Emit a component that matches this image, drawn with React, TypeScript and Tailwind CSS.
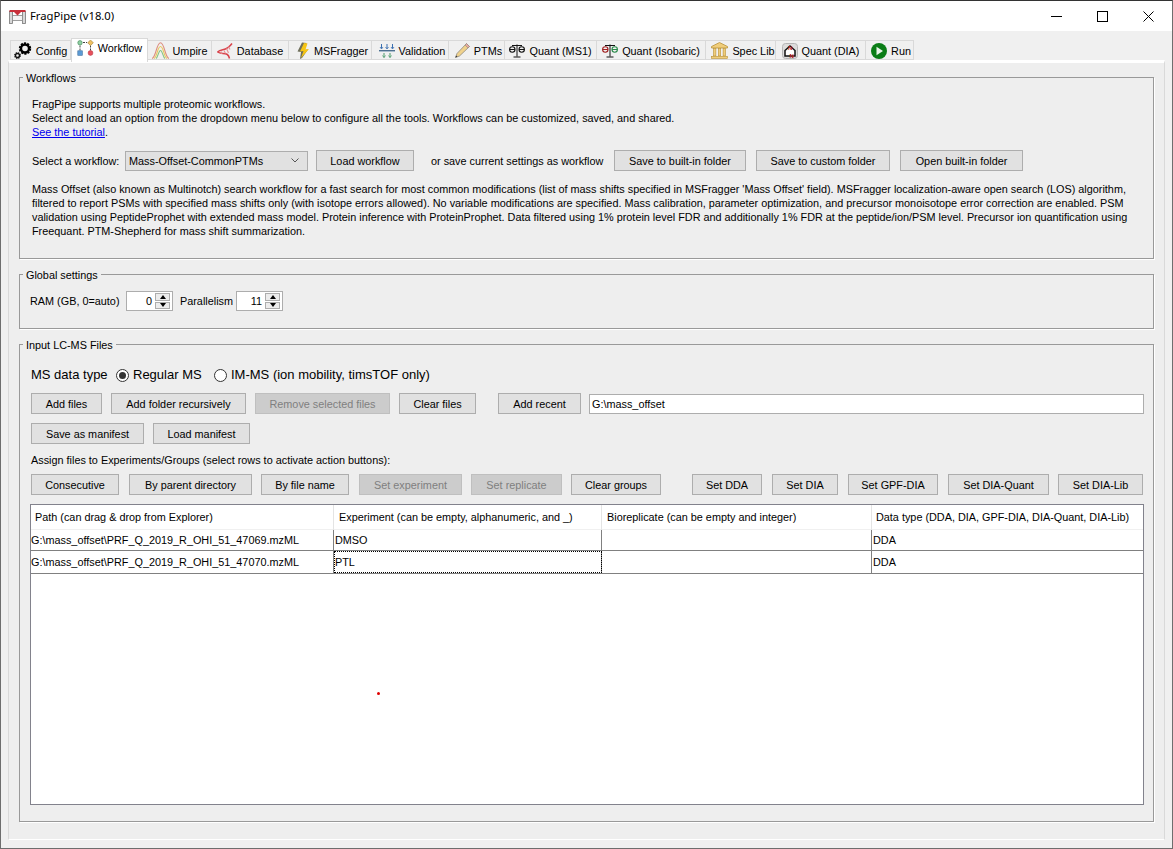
import type { ReactNode } from "react";

const fontStack = "font-['Liberation_Sans',sans-serif]";

function ConfigIcon() {
  return (
    <svg width="18" height="17" viewBox="0 0 18 17">
      <circle cx="11" cy="6.5" r="5" fill="none" stroke="#000" strokeWidth="2.4" strokeDasharray="2 1.14" />
      <circle cx="11" cy="6.5" r="4" fill="none" stroke="#000" strokeWidth="2.4" />
      <circle cx="3.5" cy="13.5" r="2.6" fill="none" stroke="#000" strokeWidth="1.5" strokeDasharray="1.2 .85" />
      <circle cx="3.5" cy="13.5" r="2" fill="none" stroke="#111" strokeWidth="1.4" />
    </svg>
  );
}

function WorkflowIcon() {
  return (
    <svg width="17" height="16" viewBox="0 0 17 16">
      <path d="M6 2.5h4M3 5.5v5M13.5 5.5v5" stroke="#444" strokeWidth="1" strokeDasharray="2 1" fill="none" />
      <circle cx="3" cy="2.8" r="2.2" fill="#8fd0a4" stroke="#4b8f5f" strokeWidth="0.7" />
      <path d="M13.5 0l2.8 2.8-2.8 2.8-2.8-2.8z" fill="#efc063" stroke="#a8863a" strokeWidth="0.7" />
      <rect x="0.8" y="10.8" width="4.5" height="4.5" fill="#5b9bd5" stroke="#3c6e9e" strokeWidth="0.6" />
      <circle cx="13.5" cy="13" r="2.4" fill="#e8505c" stroke="#b83a44" strokeWidth="0.6" />
    </svg>
  );
}

function UmpireIcon() {
  return (
    <svg width="17" height="17" viewBox="0 0 17 17" fill="none">
      <path d="M0 16.5C4 15.5 4.500 .8 8.500 .8S13 15.500 17 16.500" stroke="#dd8f80" strokeWidth="1.1" />
      <path d="M2 16.5C5 15.5 5.500 4.500 8.500 4.500S12 15.500 15 16.500" stroke="#e9c95a" strokeWidth="1.1" />
      <path d="M4 16.5C6 15.5 6.500 8.500 8.500 8.500S11 15.500 13 16.500" stroke="#84c484" strokeWidth="1.1" />
    </svg>
  );
}

function DatabaseIcon() {
  return (
    <svg width="16" height="16" viewBox="0 0 16 16" fill="none">
      <path d="M.5 9C5 5 9 9 15 .5" stroke="#d8434b" strokeWidth="1.5" />
      <path d="M.5 9C5 12 11 8 12.5 15.5" stroke="#d8434b" strokeWidth="1.5" />
      <path d="M4 8.5l1 2.5M7 7.5l1.500 3M9.500 5.500l2 4.500M11.500 3.500l1.500 3" stroke="#ea8f93" strokeWidth="1.1" />
    </svg>
  );
}

function BoltIcon() {
  return (
    <svg width="13" height="17" viewBox="0 0 13 17">
      <path d="M5 .5L.5 9.5l3.500.5-1 7 2-1 6-8.500-3.500.5L9.500 1z" fill="#6f6f5a" />
      <path d="M7 1L3 9.500l3.500-.5L4 16l8-9-3.500.5L10.500 1.500z" fill="#f6c514" />
    </svg>
  );
}

function ValidationIcon() {
  return (
    <svg width="16" height="14" viewBox="0 0 16 14" fill="none">
      <path d="M0 6.5h16" stroke="#4e6f8f" strokeWidth="1" />
      <path d="M0 7.5h16" stroke="#a8bccc" strokeWidth="1" />
      <path d="M2.5 0v4.500M8 0v4.500M13.500 0v4.500" stroke="#3a6fb0" strokeWidth="1" />
      <path d="M1 3l1.500 2L4 3M6.500 3L8 5l1.500-2M12 3l1.500 2L15 3" stroke="#3a6fb0" strokeWidth="0.8" />
      <path d="M5 9v4.500M11 9v4.500" stroke="#4a9a6a" strokeWidth="1" />
      <path d="M3.5 11.5l1.500 2 1.500-2M9.500 11.500l1.500 2 1.500-2" stroke="#4a9a6a" strokeWidth="0.8" />
    </svg>
  );
}

function PencilIcon() {
  return (
    <svg width="15" height="15" viewBox="0 0 15 15">
      <path d="M11.5 .5l3 3L4.500 13 .5 14.500 2 10.500z" fill="#f0d28c" stroke="#8f8a80" strokeWidth="0.8" />
      <path d="M11.5 .5l3 3-1.500 1.500-3-3z" fill="#e8a8a0" stroke="#8f8a80" strokeWidth="0.6" />
      <path d="M.5 14.500l.6-2 1.400 1.300z" fill="#333" />
    </svg>
  );
}

function ScaleIcon({ left = "#111", right = "#111" }: { left?: string; right?: string }) {
  return (
    <svg width="16" height="14" viewBox="0 0 16 14" fill="none">
      <path d="M8 .5v12M4.500 13h7M3 1.500h10" stroke="#111" strokeWidth="1" />
      <circle cx="3.3" cy="5.5" r="2.7" stroke={left} strokeWidth="1.1" />
      <circle cx="12.7" cy="5.5" r="2.7" stroke={right} strokeWidth="1.1" />
      <path d="M.6 5.5h5.400" stroke={left} strokeWidth="1" />
      <path d="M10 5.5h5.400" stroke={right} strokeWidth="1" />
    </svg>
  );
}

function LibraryIcon() {
  return (
    <svg width="17" height="17" viewBox="0 0 17 17">
      <path d="M8.5 .5L16.500 4.500V6H.5V4.500z" fill="#f0cd7a" stroke="#b8923a" strokeWidth="0.8" />
      <rect x="2.5" y="6.5" width="2.4" height="7.5" fill="#f0cd7a" stroke="#b8923a" strokeWidth="0.6" />
      <rect x="7.3" y="6.5" width="2.4" height="7.5" fill="#f0cd7a" stroke="#b8923a" strokeWidth="0.6" />
      <rect x="12.1" y="6.5" width="2.4" height="7.5" fill="#f0cd7a" stroke="#b8923a" strokeWidth="0.6" />
      <rect x="0.5" y="14.3" width="16" height="2.2" fill="#f0cd7a" stroke="#b8923a" strokeWidth="0.6" />
    </svg>
  );
}

function DiaIcon() {
  return (
    <svg width="16" height="16" viewBox="0 0 16 16" fill="none">
      <rect x="0.5" y="0.5" width="15" height="15" rx="3" fill="#dcdcdc" stroke="#b4b4b4" />
      <path d="M8 3l5 4.500V13H3V7.500z" stroke="#111" strokeWidth="1.5" fill="#fff" />
      <text x="6" y="6.5" fontSize="6" fontWeight="700" fill="#b82020" fontFamily="Liberation Sans, sans-serif">N</text>
      <text x="7.5" y="14.5" fontSize="6" fontWeight="700" fill="#b82020" fontFamily="Liberation Sans, sans-serif">N</text>
    </svg>
  );
}

function RunIcon() {
  return (
    <svg width="16" height="16" viewBox="0 0 16 16">
      <circle cx="8" cy="8" r="8" fill="#0a7d16" />
      <path d="M5.5 3.8L12 8l-6.500 4.200z" fill="#e8f4e8" />
    </svg>
  );
}

function AppIcon() {
  return (
    <svg width="17" height="15" viewBox="0 0 17 15" fill="none">
      <rect x="0.5" y="2.5" width="3" height="12" fill="#d8d8d8" stroke="#777" strokeWidth="0.8" />
      <rect x="13.5" y="2.5" width="3" height="12" fill="#d8d8d8" stroke="#777" strokeWidth="0.8" />
      <rect x="3.5" y="6.5" width="10" height="5" fill="#f4f4f4" stroke="#888" strokeWidth="0.8" />
      <path d="M.5 1h16v2H.5z" fill="#c8303a" />
      <path d="M5 3h7L8.500 6.500z" fill="#c8303a" />
    </svg>
  );
}

function Tab({ w, icon, label, active }: { w: string; icon: ReactNode; label: string; active?: boolean }) {
  return (
    <div
      className={`${w} flex items-center justify-center gap-[4px] border border-[#d9d9d9] whitespace-nowrap ${
        active ? "h-[24px] -mb-[2px] border-b-0 bg-white pb-[5px]" : "h-[20px] -ml-px bg-[#f0f0f0] pt-px"
      }`}
    >
      {icon}
      <span>{label}</span>
    </div>
  );
}

function Btn({ w, children, disabled }: { w: string; children: ReactNode; disabled?: boolean }) {
  return (
    <div
      className={`${w} h-[21px] flex shrink-0 items-center justify-center border whitespace-nowrap ${
        disabled ? "bg-[#cccccc] border-[#bfbfbf] text-[#7f7f7f]" : "bg-[#e1e1e1] border-[#adadad]"
      }`}
    >
      {children}
    </div>
  );
}

function Spinner({ w, value }: { w: string; value: string }) {
  return (
    <div className={`${w} h-[20px] flex bg-white border border-[#adadad] p-px`}>
      <div className="flex-1 text-right pr-[3px] leading-[16px]">{value}</div>
      <div className="w-[15px] flex flex-col gap-px mr-px">
        <div className="flex-1 flex items-center justify-center border border-[#adadad] bg-[#ececec]">
          <div className="w-0 h-0 border-x-[3px] border-x-transparent border-b-[4px] border-b-black" />
        </div>
        <div className="flex-1 flex items-center justify-center border border-[#adadad] bg-[#ececec]">
          <div className="w-0 h-0 border-x-[3px] border-x-transparent border-t-[4px] border-t-black" />
        </div>
      </div>
    </div>
  );
}

function Group({ title, className, children }: { title: string; className: string; children: ReactNode }) {
  return (
    <div className={`relative border border-[#999999] shadow-[1px_1px_0_#ffffff] ${className}`}>
      <div className="absolute -top-[7px] left-[3px] bg-[#eeeeee] px-[3px] leading-[14px]">{title}</div>
      {children}
    </div>
  );
}

function Radio({ checked }: { checked?: boolean }) {
  return (
    <div className="w-[13px] h-[13px] rounded-full border border-[#333] bg-white flex items-center justify-center">
      {checked && <div className="w-[7px] h-[7px] rounded-full bg-[#333]" />}
    </div>
  );
}

const rows = [
  { path: "G:\\mass_offset\\PRF_Q_2019_R_OHI_51_47069.mzML", exp: "DMSO" },
  { path: "G:\\mass_offset\\PRF_Q_2019_R_OHI_51_47070.mzML", exp: "PTL" },
];

export default function App() {
  return (
    <div className={`w-[1173px] h-[849px] flex flex-col overflow-hidden bg-[#f0f0f0] border border-[#6e6e6e] border-t-[#333] relative text-[10.85px] leading-[14px] text-black ${fontStack}`}>
      {/* Title bar */}
      <div className="h-[30px] shrink-0 bg-white flex items-center pl-[8px]">
        <AppIcon />
        <span className="ml-[4px] text-[11.25px] font-['Noto_Sans',sans-serif]">FragPipe (v18.0)</span>
        <div className="ml-auto flex items-center">
          <div className="w-[46px] flex justify-center"><div className="w-[11px] h-px bg-black" /></div>
          <div className="w-[46px] flex justify-center"><div className="w-[11px] h-[11px] border border-black" /></div>
          <svg className="mx-[18px]" width="11" height="11" viewBox="0 0 11 11"><path d="M.5.5l10 10M10.5.5l-10 10" stroke="#000" fill="none" /></svg>
        </div>
      </div>

      {/* Tabs */}
      <div className="flex items-end pl-[10px] pt-[7px] shrink-0 relative z-10">
        <Tab w="w-[61px]" icon={<ConfigIcon />} label="Config" />
        <Tab w="w-[77px]" active icon={<WorkflowIcon />} label="Workflow" />
        <Tab w="w-[65px]" icon={<UmpireIcon />} label="Umpire" />
        <Tab w="w-[78px]" icon={<DatabaseIcon />} label="Database" />
        <Tab w="w-[84px] pl-[5px]" icon={<BoltIcon />} label="MSFragger" />
        <Tab w="w-[78px] pl-[4px]" icon={<ValidationIcon />} label="Validation" />
        <Tab w="w-[57px] pl-[4px]" icon={<PencilIcon />} label="PTMs" />
        <Tab w="w-[93px]" icon={<ScaleIcon />} label="Quant (MS1)" />
        <Tab w="w-[110px]" icon={<ScaleIcon left="#a02020" right="#2a8a4a" />} label="Quant (Isobaric)" />
        <Tab w="w-[71px] pl-[5px]" icon={<LibraryIcon />} label="Spec Lib" />
        <Tab w="w-[91px]" icon={<DiaIcon />} label="Quant (DIA)" />
        <Tab w="w-[49px] pl-[3px]" icon={<RunIcon />} label="Run" />
      </div>

      {/* Tab panel */}
      <div className="ml-[7px] mr-[7px] mb-[8px] flex-1 min-h-0 border border-[#d9d9d9] border-b-white bg-[#eeeeee] pt-[14px] px-[10px] flex flex-col border-t-[3px] border-t-white">
        <Group title="Workflows" className="h-[182px] pt-[19px] pl-[12px] shrink-0">
          <p>FragPipe supports multiple proteomic workflows.</p>
          <p>Select and load an option from the dropdown menu below to configure all the tools. Workflows can be customized, saved, and shared.</p>
          <p><span className="text-[#0000ee] underline">See the tutorial</span>.</p>
          <div className="flex items-center mt-[11px] h-[21px]">
            <span className="w-[93px] shrink-0">Select a workflow:</span>
            <div className="w-[183px] h-[20px] shrink-0 flex items-center justify-between border border-[#adadad] bg-[#e1e1e1] pl-[3px] pr-[8px]">
              <span>Mass-Offset-CommonPTMs</span>
              <svg width="8" height="5" viewBox="0 0 8 5"><path d="M.5.5L4 4l3.500-3.500" fill="none" stroke="#555" /></svg>
            </div>
            <Btn w="w-[98px] ml-[8px]">Load workflow</Btn>
            <span className="ml-[17px] w-[183px] shrink-0 whitespace-nowrap">or save current settings as workflow</span>
            <Btn w="w-[132px]">Save to built-in folder</Btn>
            <Btn w="w-[134px] ml-[10px]">Save to custom folder</Btn>
            <Btn w="w-[123px] ml-[10px]">Open built-in folder</Btn>
          </div>
          <div className="mt-[11px] whitespace-nowrap">
            <p>Mass Offset (also known as Multinotch) search workflow for a fast search for most common modifications (list of mass shifts specified in MSFragger 'Mass Offset' field). MSFragger localization-aware open search (LOS) algorithm,</p>
            <p>filtered to report PSMs with specified mass shifts only (with isotope errors allowed). No variable modifications are specified. Mass calibration, parameter optimization, and precursor monoisotope error correction are enabled. PSM</p>
            <p>validation using PeptideProphet with extended mass model. Protein inference with ProteinProphet. Data filtered using 1% protein level FDR and additionally 1% FDR at the peptide/ion/PSM level. Precursor ion quantification using</p>
            <p>Freequant. PTM-Shepherd for mass shift summarization.</p>
          </div>
        </Group>

        <Group title="Global settings" className="h-[55px] mt-[15px] pt-[16px] pl-[10px] shrink-0">
          <div className="flex items-center">
            <span className="w-[96px] shrink-0 whitespace-nowrap">RAM (GB, 0=auto)</span>
            <Spinner w="w-[47px]" value="0" />
            <span className="ml-[7px] w-[56px] shrink-0">Parallelism</span>
            <Spinner w="w-[47px]" value="11" />
          </div>
        </Group>

        <Group title="Input LC-MS Files" className="flex-1 min-h-0 mt-[15px] pt-[22px] pl-[11px] pr-[9px] mb-[17px]">
          <div className="flex items-center text-[13px] h-[16px]">
            <span className="w-[85px] shrink-0">MS data type</span>
            <Radio checked />
            <span className="ml-[4px] w-[81px] shrink-0">Regular MS</span>
            <Radio />
            <span className="ml-[4px]">IM-MS (ion mobility, timsTOF only)</span>
          </div>
          <div className="flex items-center mt-[10px] gap-[9px]">
            <Btn w="w-[71px]">Add files</Btn>
            <Btn w="w-[135px]">Add folder recursively</Btn>
            <Btn w="w-[135px]" disabled>Remove selected files</Btn>
            <Btn w="w-[77px]">Clear files</Btn>
            <Btn w="w-[83px] ml-[13px]">Add recent</Btn>
            <div className="ml-[-1px] flex-1 h-[20px] bg-white border border-[#adadad] pl-[2px] leading-[18px]">G:\mass_offset</div>
          </div>
          <div className="flex items-center mt-[9px] gap-[9px]">
            <Btn w="w-[113px]">Save as manifest</Btn>
            <Btn w="w-[97px]">Load manifest</Btn>
          </div>
          <p className="mt-[9px]">Assign files to Experiments/Groups (select rows to activate action buttons):</p>
          <div className="flex items-center mt-[7px] gap-[9px]">
            <Btn w="w-[88px]">Consecutive</Btn>
            <Btn w="w-[123px] ml-px">By parent directory</Btn>
            <Btn w="w-[88px]">By file name</Btn>
            <Btn w="w-[103px] ml-px" disabled>Set experiment</Btn>
            <Btn w="w-[91px]" disabled>Set replicate</Btn>
            <Btn w="w-[90px]">Clear groups</Btn>
            <Btn w="w-[70px] ml-[22px]">Set DDA</Btn>
            <Btn w="w-[66px] ml-px">Set DIA</Btn>
            <Btn w="w-[90px] ml-px">Set GPF-DIA</Btn>
            <Btn w="w-[101px] ml-px">Set DIA-Quant</Btn>
            <Btn w="w-[85px]">Set DIA-Lib</Btn>
          </div>

          {/* File table */}
          <div className="-ml-px mt-[9px] h-[301px] w-[1114px] bg-white border border-[#82828c]">
            <div className="grid grid-cols-[303px_268px_270px_1fr] h-[25px] border-b border-[#f0f0f0] leading-[25px]">
              <div className="pl-[4px] border-r border-[#e4e4e4]">Path (can drag &amp; drop from Explorer)</div>
              <div className="pl-[5px] border-r border-[#e4e4e4]">Experiment (can be empty, alphanumeric, and _)</div>
              <div className="pl-[5px] border-r border-[#e4e4e4]">Bioreplicate (can be empty and integer)</div>
              <div className="pl-[4px]">Data type (DDA, DIA, GPF-DIA, DIA-Quant, DIA-Lib)</div>
            </div>
            {rows.map((row, i) => (
              <div key={row.exp} className={`grid grid-cols-[303px_268px_270px_1fr] border-b border-[#808080] ${i === 0 ? "h-[21px] leading-[20px]" : "h-[23px] leading-[22px]"}`}>
                <div className="border-r border-[#808080]">{row.path}</div>
                <div className={`pl-px border-r border-[#808080] ${i === 1 ? "outline-1 -outline-offset-1 outline-dotted outline-black" : ""}`}>{row.exp}</div>
                <div className="border-r border-[#808080]" />
                <div className="pl-px">DDA</div>
              </div>
            ))}
          </div>
        </Group>
      </div>

      {/* Cursor dot from the capture */}
      <div className="absolute left-[376px] top-[691px] w-[3px] h-[3px] rounded-full bg-[#e00000]" />
    </div>
  );
}
